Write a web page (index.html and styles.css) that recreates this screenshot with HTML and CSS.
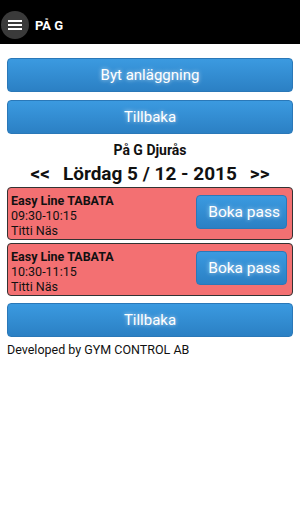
FILE: index.html
```html
<!DOCTYPE html>
<html>
<head>
  <title>På G</title>
  <meta charset="UTF-8">
  <link rel="stylesheet" href="styles.css">
</head>
<body>
  <div class="topbar">
    <span class="menu-btn">
      <svg width="14" height="10" viewBox="0 0 14 10">
        <rect x="0" y="0" width="14" height="2" fill="#fff"/>
        <rect x="0" y="4" width="14" height="2" fill="#fff"/>
        <rect x="0" y="8" width="14" height="2" fill="#fff"/>
      </svg>
    </span>
    <span class="topbar-title">PÅ G</span>
  </div>

  <div class="content">
    <button class="btn">Byt anläggning</button>
    <button class="btn">Tillbaka</button>

    <div class="place">På G Djurås</div>
    <div class="date-nav">
      <span>&lt;&lt;</span>
      <span class="date">Lördag 5 / 12 - 2015</span>
      <span>&gt;&gt;</span>
    </div>

    <!-- pass -->
    <div class="pass">
      <div class="pass-info">
        <b>Easy Line TABATA</b>
        <span>09:30-10:15</span>
        <span>Titti Näs</span>
      </div>
      <button class="btn btn-book">Boka pass</button>
    </div>
    <div class="pass">
      <div class="pass-info">
        <b>Easy Line TABATA</b>
        <span>10:30-11:15</span>
        <span>Titti Näs</span>
      </div>
      <button class="btn btn-book">Boka pass</button>
    </div>

    <button class="btn">Tillbaka</button>
    <p class="footer">Developed by GYM CONTROL AB</p>
  </div>
</body>
</html>
```

FILE: styles.css
```css
body {
  margin: 0;
  font-family: Roboto, "Liberation Sans", sans-serif;
  color: #111;
  background: #fff;
}
.topbar { height: 44px; background: #000; display: flex; align-items: center; padding: 6px 0 0 1px; box-sizing: border-box; }
.menu-btn {
  width: 28px; height: 28px; border-radius: 50%;
  background: #3a3a3a;
  display: flex; align-items: center; justify-content: center;
}
.topbar-title { color: #fff; font-weight: bold; font-size: 13px; margin-left: 6px; }
.content { padding: 14px 7px 0; display: flex; flex-direction: column; }
.btn {
  font-family: inherit;
  font-size: 15px;
  color: #fff;
  text-shadow: 0 0 4px rgba(255,255,255,0.7);
  background: linear-gradient(#3b9ae0, #2b80c4);
  border: 1px solid #2a78b8;
  border-radius: 4px;
  height: 34px;
  margin-bottom: 8px;
  padding: 0;
  cursor: pointer;
}
.place { text-align: center; font-weight: bold; font-size: 14px; margin-top: 0; }
.date-nav { display: flex; justify-content: center; gap: 13px; font-weight: bold; font-size: 19px; margin: 4px 0 2px; }
.pass {
  display: flex; align-items: flex-start; justify-content: space-between;
  background: #f37072;
  border: 1px solid #333;
  border-radius: 4px;
  height: 53px; box-sizing: border-box;
  margin-bottom: 3px;
  padding: 5px 5px 0 3px;
}
.pass-info { display: flex; flex-direction: column; font-size: 12.5px; line-height: 15px; }
.btn-book { width: 91px; font-size: 15.5px; text-align: right; padding-right: 6px; margin: 2px 0 0; }
.pass + .btn { margin-top: 4px; }
.footer { margin: -3px 0 0; font-size: 12.5px; }
```
